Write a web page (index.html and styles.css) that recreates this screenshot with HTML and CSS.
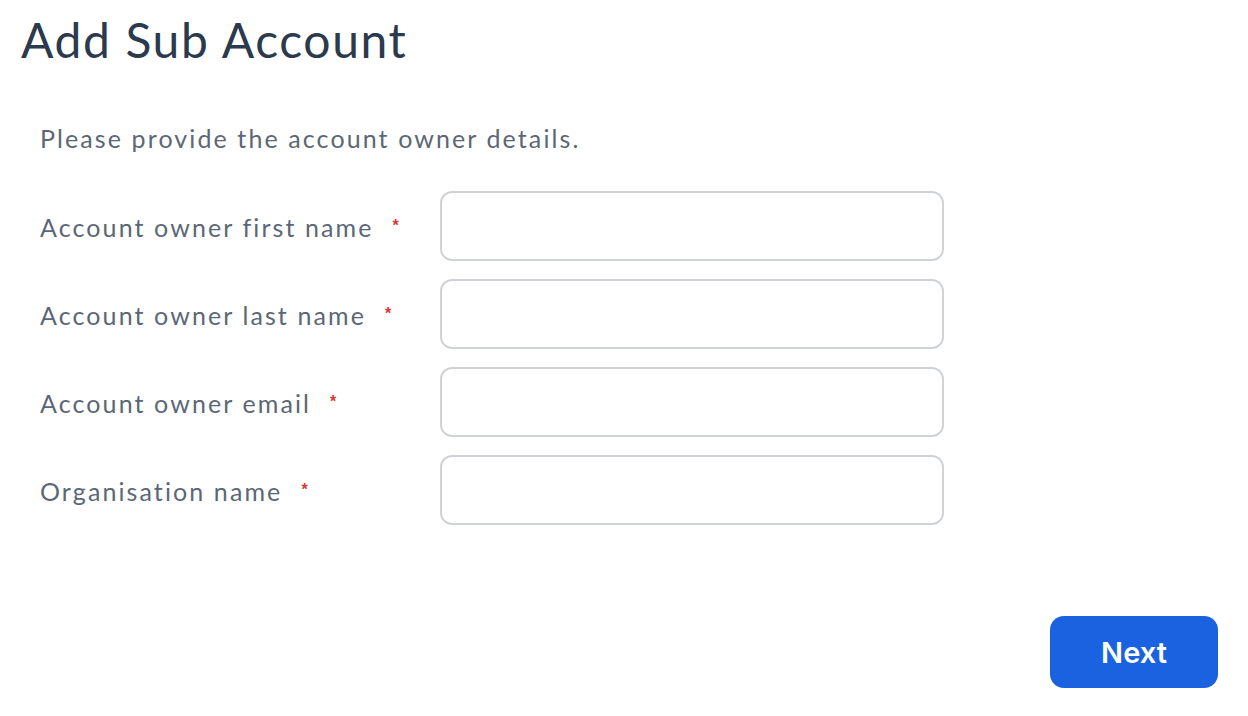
FILE: index.html
```html
<!DOCTYPE html>
<html>
<head>
<meta charset="utf-8">
<link rel="stylesheet" href="styles.css">
</head>
<body>
<div class="page">
  <h1 class="title">Add Sub Account</h1>
  <form class="form">
    <p class="intro">Please provide the account owner details.</p>
    <div class="row">
      <label class="label">Account owner first name<span class="req">*</span></label>
      <input class="field" type="text">
    </div>
    <div class="row">
      <label class="label">Account owner last name<span class="req">*</span></label>
      <input class="field" type="text">
    </div>
    <div class="row">
      <label class="label">Account owner email<span class="req">*</span></label>
      <input class="field" type="text">
    </div>
    <div class="row">
      <label class="label">Organisation name<span class="req">*</span></label>
      <input class="field" type="text">
    </div>
    <div class="actions">
      <button class="btn" type="button">Next</button>
    </div>
  </form>
</div>
</body>
</html>
```

FILE: styles.css
```css
html, body {
  margin: 0;
  padding: 0;
  background: #ffffff;
}
body {
  font-family: "Lato", "Noto Sans", sans-serif;
}
.page {
  width: 1248px;
  height: 716px;
  box-sizing: border-box;
  padding: 10px 30px 0 21px;
}
.title {
  margin: 0;
  font-size: 48px;
  font-weight: 400;
  letter-spacing: 1.6px;
  color: #2b3a4c;
  line-height: 60px;
}
.form {
  margin: 0;
  padding-left: 19px;
  display: flex;
  flex-direction: column;
}
.intro {
  margin: 53px 0 0 0;
  font-size: 25px;
  line-height: 30px;
  letter-spacing: 2.1px;
  color: #5b6776;
}
.row {
  display: flex;
  align-items: center;
  margin-top: 18px;
}
.intro + .row {
  margin-top: 38px;
}
.label {
  width: 400px;
  font-size: 25px;
  letter-spacing: 2.1px;
  color: #5b6776;
  display: flex;
  align-items: center;
  padding-top: 2px;
  box-sizing: border-box;
}
.req {
  color: #d93636;
  font-family: "Liberation Sans", sans-serif;
  font-size: 16px;
  font-weight: 700;
  letter-spacing: 0;
  margin-left: 19px;
  position: relative;
  top: -1px;
}
.field {
  width: 504px;
  height: 70px;
  box-sizing: border-box;
  border: 2px solid #cfd3d8;
  border-radius: 12px;
  background: #fff;
  outline: none;
  margin: 0;
}
.actions {
  display: flex;
  justify-content: flex-end;
  margin-top: 91px;
}
.btn {
  width: 168px;
  height: 72px;
  border: none;
  border-radius: 14px;
  background: #1a62e0;
  color: #ffffff;
  font-family: "Inter", "Roboto", sans-serif;
  font-size: 29px;
  font-weight: 600;
  cursor: pointer;
}
```
